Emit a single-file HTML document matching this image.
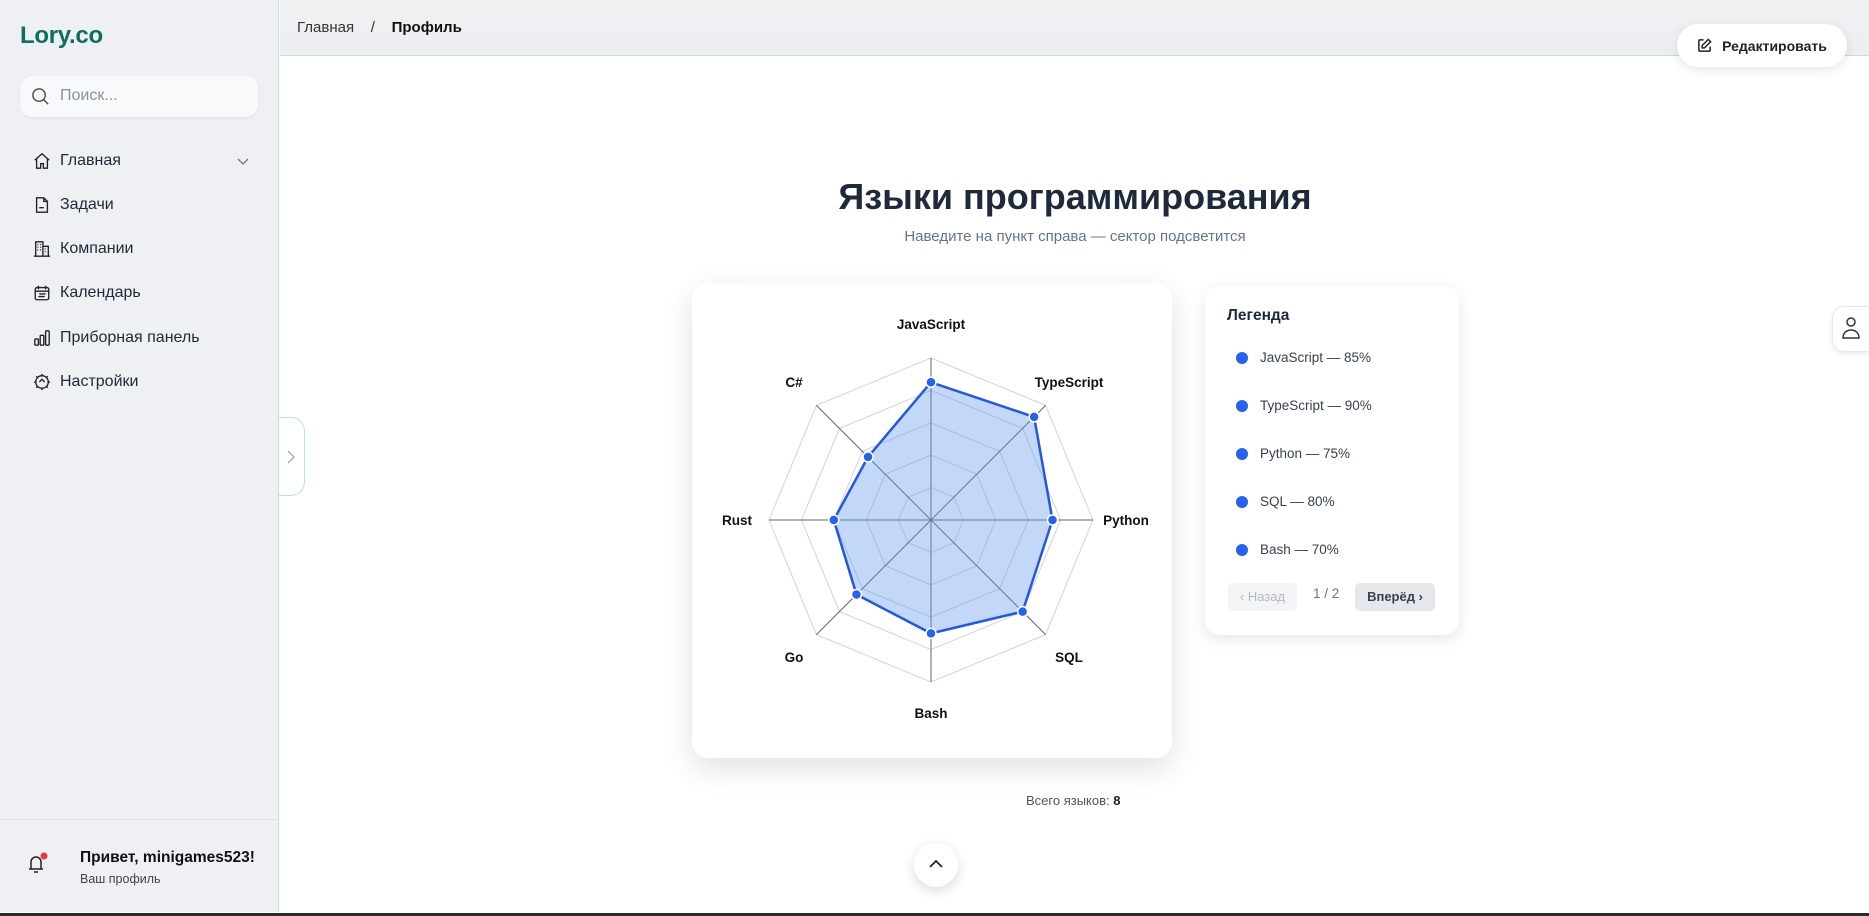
<!DOCTYPE html>
<html><head><meta charset="utf-8">
<style>
*{box-sizing:border-box;margin:0;padding:0}
body{width:1869px;height:916px;overflow:hidden;background:#fff;font-family:"Liberation Sans","Noto Sans CJK SC",sans-serif;position:relative;color:#1f2937}
.abs{position:absolute}
#side{left:0;top:0;width:279px;height:912px;background:#eef0f3;border-right:1px solid #b9e4dc}
.logo{left:20px;top:22px;font-size:24px;font-weight:bold;color:#0f6e5e;letter-spacing:-0.3px}
.search{left:20px;top:76px;width:238px;height:41px;background:#f8f9fa;border-radius:12px;box-shadow:0 1px 3px rgba(0,0,0,.06)}
.search span{position:absolute;left:40px;top:11px;font-size:16px;color:#8a8f98}
.nav{left:33px;font-size:16px;color:#1f2937;display:flex;align-items:center}
.nav svg{width:18px;height:18px;margin-right:9px;fill:none;stroke:#222;stroke-width:1.5}
#hdr{left:280px;top:0;width:1589px;height:56px;background:linear-gradient(#f0f1f3,#eceef1);border-bottom:1px solid #b9e4dc}
.bc{left:297px;top:19px;font-size:15px;color:#333}
.edit{left:1677px;top:24px;width:170px;height:43px;background:#fff;border-radius:22px;box-shadow:0 3px 10px rgba(0,0,0,.1);font-size:14px;font-weight:600;color:#222;display:flex;align-items:center;justify-content:center}
.card{background:#fff;border-radius:16px;box-shadow:0 10px 30px rgba(0,0,0,.12)}
.li{left:1236px;font-size:13.5px;color:#374151;display:flex;align-items:center}
.li i{display:inline-block;width:12px;height:12px;border-radius:50%;background:#2563eb;margin-right:12px}
</style></head><body>
<div id="side" class="abs"></div>
<div class="abs logo">Lory.co</div>
<div class="abs search"><svg class="abs" style="left:11px;top:11px" width="19" height="19" viewBox="0 0 20 20" fill="none" stroke="#555" stroke-width="1.6"><circle cx="8.5" cy="8.5" r="6.5"/><path d="M13.5 13.5L18 18"/></svg><span>Поиск...</span></div>

<div class="abs nav" style="top:152px"><svg viewBox="0 0 20 20"><path d="M2 9L10 2l8 7M4 7.5V18h4.5v-5h3v5H16V7.5"/></svg>Главная</div>
<svg class="abs" style="left:236px;top:157px" width="14" height="10" viewBox="0 0 14 10" fill="none" stroke="#777" stroke-width="1.3"><path d="M2 2l5 5 5-5"/></svg>
<div class="abs nav" style="top:196px"><svg viewBox="0 0 20 20"><path d="M4 2h8l4 4v12H4zM12 2v4h4M7 13h5"/></svg>Задачи</div>
<div class="abs nav" style="top:240px"><svg viewBox="0 0 20 20"><path d="M3 18V2h8v16M11 7h6v11M1 18h18M5 5h1M8 5h1M5 8h1M8 8h1M5 11h1M8 11h1M13 10h1M13 13h1"/></svg>Компании</div>
<div class="abs nav" style="top:284px"><svg viewBox="0 0 20 20"><rect x="2.5" y="4" width="15" height="13.5" rx="2"/><path d="M2.5 8h15M6 2v4M14 2v4M7 11h7M6 14h7"/></svg>Календарь</div>
<div class="abs nav" style="top:329px"><svg viewBox="0 0 20 20"><rect x="2" y="11" width="4" height="7" rx="1"/><rect x="8" y="7" width="4" height="11" rx="1"/><rect x="14" y="2" width="4" height="16" rx="1"/></svg>Приборная панель</div>
<div class="abs nav" style="top:373px"><svg viewBox="0 0 20 20"><circle cx="10" cy="10" r="7"/><path d="M10 1v3M10 16v3M1 10h3M16 10h3M3.6 3.6l2 2M14.4 14.4l2 2M3.6 16.4l2-2M14.4 5.6l2-2M7 10l3-3 3 3"/></svg>Настройки</div>

<div class="abs" style="left:0;top:819px;width:279px;height:1px;background:#dfe2e6"></div>
<svg class="abs" style="left:27px;top:852px" width="22" height="24" viewBox="0 0 22 24" fill="none" stroke="#222" stroke-width="1.5"><path d="M4 17V10a5 5 0 0110 0v7M2 17h14M7 20h4"/><circle cx="17" cy="4" r="3.5" fill="#ef3340" stroke="none"/></svg>
<div class="abs" style="left:80px;top:849px;font-size:15.5px;font-weight:bold;color:#111">Привет, minigames523!</div>
<div class="abs" style="left:80px;top:872px;font-size:12.5px;color:#444">Ваш профиль</div>

<div id="hdr" class="abs"></div>
<div class="abs bc">Главная&nbsp;&nbsp;&nbsp;&nbsp;/&nbsp;&nbsp;&nbsp;&nbsp;<b style="color:#111">Профиль</b></div>
<div class="abs edit"><svg width="15" height="15" viewBox="0 0 16 16" fill="none" stroke="#222" stroke-width="1.6" style="margin-right:10px"><path d="M7 2H3a1 1 0 00-1 1v10a1 1 0 001 1h10a1 1 0 001-1V9M12 1.5l2.5 2.5L8 10.5H5.5V8z"/></svg>Редактировать</div>

<div class="abs" style="left:279px;top:417px;width:26px;height:79px;background:#fff;border:1px solid #b9e4dc;border-left:none;border-radius:0 14px 14px 0"></div>
<svg class="abs" style="left:286px;top:449px" width="10" height="16" viewBox="0 0 10 16" fill="none" stroke="#aaa" stroke-width="1.4"><path d="M2 2l6 6-6 6"/></svg>

<div class="abs" style="left:1832px;top:306px;width:40px;height:46px;background:#fff;border:1px solid #e5e7eb;border-radius:12px 0 0 12px;box-shadow:0 2px 6px rgba(0,0,0,.08)"></div>
<svg class="abs" style="left:1841px;top:316px" width="20" height="24" viewBox="0 0 20 24" fill="none" stroke="#333" stroke-width="1.5"><circle cx="10" cy="6" r="4"/><path d="M2 22c0-5 3.5-8 8-8s8 3 8 8z"/></svg>

<div class="abs" style="left:575px;width:1000px;top:176px;text-align:center;font-size:36px;font-weight:bold;color:#1e293b">Языки программирования</div>
<div class="abs" style="left:575px;width:1000px;top:228px;text-align:center;font-size:15px;color:#64748b">Наведите на пункт справа — сектор подсветится</div>

<div class="abs card" style="left:692px;top:283px;width:480px;height:475px"></div>
<svg class="abs" style="left:0;top:0" width="1869" height="916">
<g transform="translate(931,520)" fill="none">
<g stroke="#d4d4d4" stroke-width="1">
<polygon points="0,-162 114.6,-114.6 162,0 114.6,114.6 0,162 -114.6,114.6 -162,0 -114.6,-114.6"/>
<polygon points="0,-129.6 91.6,-91.6 129.6,0 91.6,91.6 0,129.6 -91.6,91.6 -129.6,0 -91.6,-91.6"/>
<polygon points="0,-97.2 68.7,-68.7 97.2,0 68.7,68.7 0,97.2 -68.7,68.7 -97.2,0 -68.7,-68.7"/>
<polygon points="0,-64.8 45.8,-45.8 64.8,0 45.8,45.8 0,64.8 -45.8,45.8 -64.8,0 -45.8,-45.8"/>
<polygon points="0,-32.4 22.9,-22.9 32.4,0 22.9,22.9 0,32.4 -22.9,22.9 -32.4,0 -22.9,-22.9"/>
</g>
<g stroke="#666" stroke-width="1">
<path d="M0 -162V162M-162 0H162M-114.6 -114.6L114.6 114.6M114.6 -114.6L-114.6 114.6"/>
</g>
</g>
<polygon points="931,382.3 1034.1,416.9 1052.5,520 1022.6,611.6 931,633.4 856.5,594.5 833.8,520 868,457" fill="rgba(96,150,240,0.38)" stroke="#2358e0" stroke-width="2.5" stroke-linejoin="round"/>
<g fill="#2563eb" stroke="#fff" stroke-width="1.5">
<circle cx="931" cy="382.3" r="5"/><circle cx="1034.1" cy="416.9" r="5"/><circle cx="1052.5" cy="520" r="5"/><circle cx="1022.6" cy="611.6" r="5"/><circle cx="931" cy="633.4" r="5"/><circle cx="856.5" cy="594.5" r="5"/><circle cx="833.8" cy="520" r="5"/><circle cx="868" cy="457" r="5"/>
</g>
<g font-family="Liberation Sans,sans-serif" font-size="13.5" font-weight="bold" fill="#111" text-anchor="middle">
<text x="931" y="329">JavaScript</text><text x="1069" y="387">TypeScript</text><text x="1126" y="525">Python</text><text x="1069" y="662">SQL</text><text x="931" y="718">Bash</text><text x="794" y="662">Go</text><text x="737" y="525">Rust</text><text x="794" y="387">C#</text>
</g>
</svg>

<div class="abs card" style="left:1205px;top:286px;width:254px;height:349px;border-radius:14px;box-shadow:0 4px 14px rgba(0,0,0,.1)"></div>
<div class="abs" style="left:1227px;top:307px;font-size:15.5px;font-weight:bold;color:#1e293b">Легенда</div>
<div class="abs li" style="top:350px"><i></i>JavaScript — 85%</div>
<div class="abs li" style="top:398px"><i></i>TypeScript — 90%</div>
<div class="abs li" style="top:446px"><i></i>Python — 75%</div>
<div class="abs li" style="top:494px"><i></i>SQL — 80%</div>
<div class="abs li" style="top:542px"><i></i>Bash — 70%</div>
<div class="abs" style="left:1228px;top:583px;width:69px;height:28px;background:#f3f4f6;border-radius:5px;font-size:13px;color:#b5b9c0;text-align:center;line-height:28px">‹ Назад</div>
<div class="abs" style="left:1313px;top:586px;font-size:13.5px;color:#6b7280">1 / 2</div>
<div class="abs" style="left:1355px;top:583px;width:80px;height:28px;background:#e5e7eb;border-radius:5px;font-size:13px;font-weight:bold;color:#374151;text-align:center;line-height:28px">Вперёд ›</div>

<div class="abs" style="left:1026px;top:793px;font-size:13px;color:#4b5563">Всего языков: <b style="color:#222">8</b></div>

<div class="abs" style="left:914px;top:843px;width:44px;height:44px;border-radius:50%;background:#fff;box-shadow:0 4px 12px rgba(0,0,0,.14)"></div>
<svg class="abs" style="left:928px;top:858px" width="16" height="12" viewBox="0 0 16 12" fill="none" stroke="#222" stroke-width="1.8"><path d="M2 9l6-6 6 6"/></svg>

<div class="abs" style="left:0;top:913px;width:1869px;height:3px;background:#2a2a2a"></div>
</body></html>
